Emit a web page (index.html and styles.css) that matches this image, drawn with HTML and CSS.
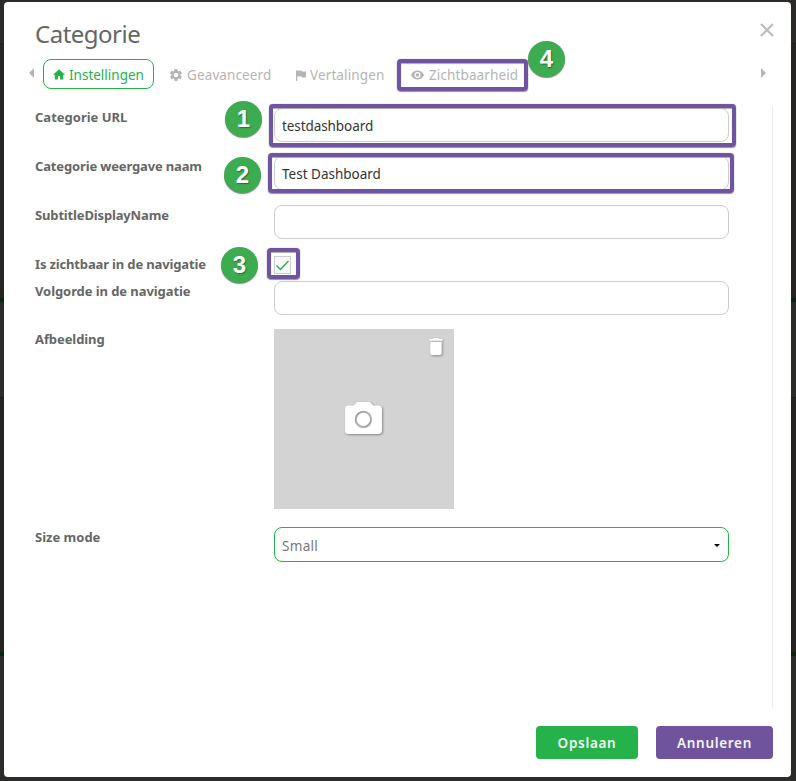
FILE: index.html
```html
<!DOCTYPE html>
<html lang="nl">
<head>
<meta charset="utf-8">
<title>Categorie</title>
<link rel="stylesheet" href="styles.css">
</head>
<body>
<div class="dialog">
  <header class="head">
    <h1 class="title">Categorie</h1>
    <svg class="close" width="14" height="14" viewBox="0 0 14 14"><path d="M1 1l12 12M13 1l-12 12"/></svg>
  </header>
  <nav class="tabs">
    <i class="arrow arrow-left"></i>
    <div class="tab active">
      <svg width="12" height="11" viewBox="0 0 12 11"><path d="M6 .3L0 5.7h1.8V10.6h3.1V7h2.2v3.6h3.1V5.7H12z"/></svg>
      <span class="t-set">Instellingen</span>
    </div>
    <div class="tab tab-adv">
      <svg width="12" height="12" viewBox="2 2 20 20"><path d="M19.4 13c0-.3.1-.6.1-1s0-.7-.1-1l2.1-1.600c.2-.1.2-.4.1-.6l-2-3.500c-.1-.2-.4-.3-.6-.2l-2.500 1c-.5-.4-1.100-.7-1.700-1l-.4-2.600c0-.3-.2-.5-.5-.5h-4c-.2 0-.5.2-.5.4l-.4 2.700c-.6.2-1.100.6-1.700 1l-2.500-1c-.2-.1-.5 0-.6.200l-2 3.500c-.1.2-.1.5.1.6L4.500 11c0 .3-.1.600-.1 1s0 .7.1 1l-2.100 1.600c-.2.1-.2.4-.1.6l2 3.500c.1.2.4.3.6.2l2.500-1c.5.4 1.100.7 1.700 1l.4 2.600c0 .3.2.5.5.5h4c.2 0 .5-.2.5-.4l.4-2.700c.6-.2 1.100-.6 1.700-1l2.500 1c.2.1.5 0 .6-.2l2-3.500c.1-.2.1-.5-.1-.6zM12 15.900a3.900 3.900 0 1 1 0-7.800 3.900 3.900 0 0 1 0 7.800z"/></svg>
      <span class="t-adv">Geavanceerd</span>
    </div>
    <div class="tab tab-lang">
      <svg width="10" height="11" viewBox="0 0 10 11"><path d="M0 .5h5.600l.4 1h4v6H6l-.4-1H1.300V11H0z"/></svg>
      <span class="t-lang">Vertalingen</span>
    </div>
    <div class="tab tab-vis">
      <svg width="13" height="10" viewBox="0 0 13 10"><path fill-rule="evenodd" d="M6.500 .5C3.500.5 1 2.300 0 5c1 2.700 3.500 4.500 6.500 4.500S12 7.700 13 5C12 2.300 9.500.5 6.500.5zM6.500 8a3 3 0 1 1 0-6 3 3 0 0 1 0 6zM6.500 3.200a1.800 1.800 0 1 0 0 3.600 1.800 1.800 0 0 0 0-3.600z"/></svg>
      <span class="t-vis">Zichtbaarheid</span>
    </div>
    <i class="arrow arrow-right"></i>
  </nav>
  <main class="form">
    <div class="row first-row"><label>Categorie URL</label><div class="field first">testdashboard</div></div>
    <div class="row"><label class="tight">Categorie weergave naam</label><div class="field">Test Dashboard</div></div>
    <div class="row"><label class="tight">SubtitleDisplayName</label><div class="field"></div></div>
    <div class="row check-row"><label class="tight">Is zichtbaar in de navigatie</label>
      <div class="check"><svg width="15" height="15" viewBox="0 0 15 15"><path d="M1.500 8.500l4 4 8-8.500"/></svg></div></div>
    <div class="row"><label class="snug">Volgorde in de navigatie</label><div class="field"></div></div>
    <div class="row image-row"><label class="snug">Afbeelding</label>
      <div class="image">
        <svg class="trash" width="14" height="17" viewBox="0 0 14 18"><path d="M0 1h4l1-1h4l1 1h4v2H0zM1 4h12v12q0 2-2 2H3q-2 0-2-2z"/></svg>
        <svg class="camera" width="37" height="32" viewBox="0 0 38 33"><path fill-rule="evenodd" d="M12.500 0h13L29 3.500h5.500Q38 3.500 38 7v22.500Q38 33 34.500 33h-31Q0 33 0 29.500V7q0-3.500 3.500-3.500H9zM19 9a9 9 0 1 0 0 18 9 9 0 0 0 0-18z"/><circle cx="19" cy="18" r="6.800"/></svg>
      </div></div>
    <div class="row"><label>Size mode</label><div class="field select"><span class="option">Small</span><i class="caret"></i></div></div>
  </main>
  <footer class="foot">
    <button class="btn save">Opslaan</button>
    <button class="btn cancel">Annuleren</button>
  </footer>
</div>
<div class="mark mark-1"></div>
<div class="mark mark-2"></div>
<div class="mark mark-3"></div>
<div class="mark mark-4"></div>
<div class="badge badge-1">1</div>
<div class="badge badge-2">2</div>
<div class="badge badge-3">3</div>
<div class="badge badge-4">4</div>
</body>
</html>
```
FILE: styles.css
```css
* { box-sizing: border-box; }
body {
  margin: 0;
  height: 781px;
  padding: 2px 5px 4px 4px;
  overflow: hidden;
  position: relative;
  font-family: "Noto Sans", sans-serif;
  font-size: 13.500px;
  color: #666;
  background: linear-gradient(#2b2a29 0 43px, #172319 43px 44px, #262523 44px 298px, #0b2411 298px 302px, #2b2b29 302px 397px, #17231a 397px 398px, #252422 398px 652px, #0b2411 652px 656px, #2b2b2a 656px);
}
.dialog {
  height: 775px;
  background: #fff;
  border-radius: 4px;
  display: flex;
  flex-direction: column;
}
.head {
  display: flex;
  justify-content: space-between;
  align-items: flex-start;
  height: 57px;
  padding: 15px 17px 0 31px;
}
.title { margin: 0; font-size: 24px; line-height: 34px; font-weight: 400; letter-spacing: -.5px; }
.close { margin-top: 6px; fill: none; stroke: #bdbdbd; stroke-width: 2.200; }
.tabs { display: flex; height: 31px; padding: 0 25px 0 25px; color: #b5b5b5; }
.arrow { width: 0; height: 0; border: solid transparent; border-width: 5px 0; margin-top: 9px; }
.arrow-left { border-right: 5px solid #b5b5b5; }
.arrow-right { border-left: 5px solid #b5b5b5; margin-left: auto; }
.tab { display: flex; align-items: center; height: 32px; line-height: 32px; white-space: nowrap; }
.tab svg { fill: currentColor; flex: none; }
.active { width: 111px; height: 30px; margin-left: 9px; padding-left: 9px; gap: 4px; border: 1px solid #25b24b; border-radius: 8px; color: #25b24b; }
.t-set { padding-top: 2px; }
.tab-adv { width: 126px; margin-left: 16px; gap: 5px; }
.tab-lang { width: 115px; gap: 4px; }
.tab-vis { gap: 5px; }
.t-adv, .t-lang, .t-vis { letter-spacing: .12px; }
.form {
  height: 601px;
  margin: 17px 18px 1px 31px;
  border-right: 1px solid #ececec;
}
.row { display: flex; align-items: flex-start; margin-bottom: 15px; }
.first-row { height: 34px; }
label { width: 239px; line-height: 20px; font-weight: 700; white-space: nowrap; font-size: 13px; }
.tight { letter-spacing: -.15px; }
.snug { letter-spacing: -.08px; }
.field {
  width: 455px;
  height: 34px;
  padding-left: 7px;
  border: 1px solid #ccc;
  border-radius: 8px;
  line-height: 35px;
  color: #333;
}
.first { margin-top: 1px; letter-spacing: -.08px; }
.check-row { height: 27px; margin: 0; }
.check { width: 17px; height: 18px; margin-top: 2px; border: 1px solid #ccc; background: #f8f8f8; }
.check svg { display: block; fill: none; stroke: #25b24b; stroke-width: 1.400; }
.image-row { height: 180px; margin: -1px 0 18px; }
.image {
  display: flex;
  align-items: center;
  justify-content: center;
  position: relative;
  width: 180px;
  height: 180px;
  padding: 0 1px 2px 0;
  background: #d3d3d3;
}
.image svg { fill: #fff; filter: drop-shadow(1px 1px 1px #888); }
.trash { position: absolute; right: 11px; top: 9px; }
.select { display: flex; justify-content: space-between; height: 35px; padding-right: 8px; line-height: 37px; border-color: #25b24b; color: #777; }
.option { letter-spacing: .3px; }
.caret { width: 0; height: 0; margin-top: 16px; border: solid transparent; border-width: 3px 3px 0; border-top-color: #000; }
.foot { display: flex; justify-content: flex-end; gap: 18px; padding: 17px 18px 0 0; }
.btn { height: 33px; padding: 0; border: 0; border-radius: 4px; color: #f4f4f4; font: 600 13.500px "Noto Sans", sans-serif; letter-spacing: .7px; }
.save { width: 102px; background: #25b24b; }
.cancel { width: 117px; background: #6f549d; }
.mark { position: absolute; border: 4px solid #6f549f; border-radius: 4px; box-shadow: 0 0 1px #777, 0 1px 1px #999, inset 0 1px 1px #aaa; }
.mark-1 { left: 269px; top: 104px; width: 467px; height: 43px; }
.mark-2 { left: 268px; top: 153px; width: 466px; height: 40px; }
.mark-3 { left: 267px; top: 248px; width: 33px; height: 31px; }
.mark-4 { left: 397px; top: 59px; width: 131px; height: 32px; }
.badge {
  position: absolute;
  width: 37px;
  height: 36px;
  border-radius: 50%;
  background: #3dab50;
  box-shadow: 0 1px 1px #888;
  color: #fff;
  font: 700 24px/36px "Liberation Sans", sans-serif;
  text-align: center;
  text-shadow: 1px 1px 1px #286f34;
}
.badge-1 { left: 225px; top: 101px; }
.badge-2 { left: 224px; top: 157px; }
.badge-3 { left: 221px; top: 247px; }
.badge-4 { left: 528px; top: 41px; }
```
